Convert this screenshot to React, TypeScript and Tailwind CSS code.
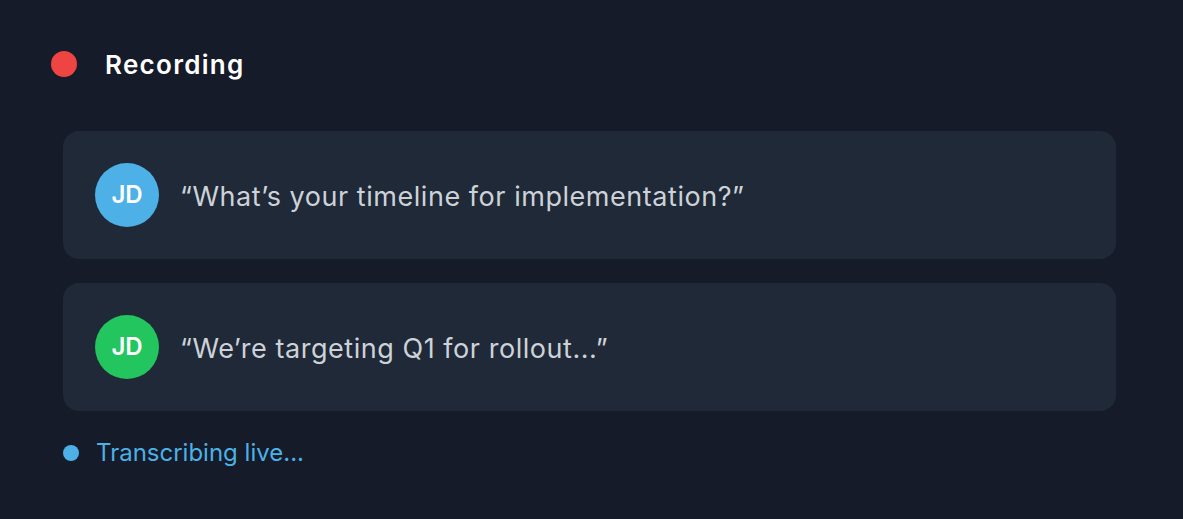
import React from 'react';

type Line = { initials: string; color: string; text: string };

const lines: Line[] = [
  { initials: 'JD', color: 'bg-[#4db0e6]', text: '\u201cWhat\u2019s your timeline for implementation?\u201d' },
  { initials: 'JD', color: 'bg-[#22c55e]', text: '\u201cWe\u2019re targeting Q1 for rollout...\u201d' },
];

const App: React.FC = () => {
  return (
    <div
      className="min-h-screen bg-[#151b29] pl-[51px] pr-[67px] pt-[51px]"
      style={{ fontFamily: 'Inter, "Noto Sans", sans-serif' }}
    >
      <div className="flex items-center gap-[28px] h-[26px]">
        <div className="w-[26px] h-[26px] rounded-full bg-[#ef4444]" />
        <h1 className="text-[26px] font-semibold tracking-[0.05em] text-white">Recording</h1>
      </div>

      <div className="mt-[54px] ml-3 flex flex-col gap-6">
        {lines.map((l, i) => (
          <div key={i} className="flex items-center gap-[21px] rounded-2xl bg-[#1f2937] p-8">
            <div
              className={`w-16 h-16 rounded-full ${l.color} flex items-center justify-center text-white text-[24px] font-semibold`}
            >
              {l.initials}
            </div>
            <p className="text-[27px] tracking-[0.02em] text-[#cdd2d9] pt-1">{l.text}</p>
          </div>
        ))}
      </div>

      <div className="mt-6 ml-3 flex items-center gap-[17px]">
        <div className="w-4 h-4 rounded-full bg-[#4db0e6]" />
        <span className="text-[24px] text-[#4db0e6]">Transcribing live...</span>
      </div>
    </div>
  );
};

export default App;
